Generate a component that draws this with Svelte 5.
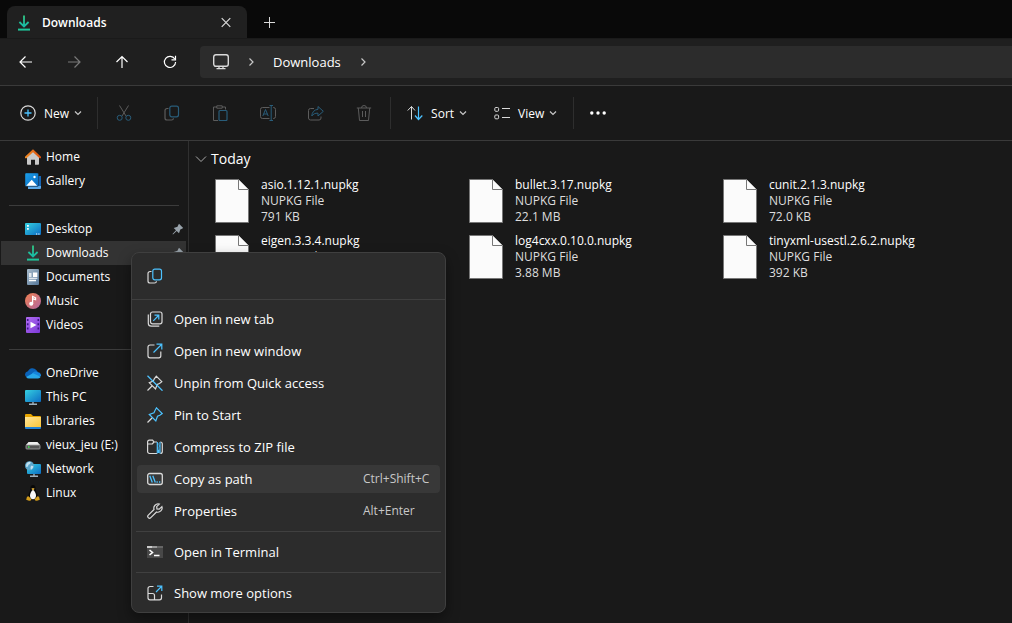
<script>
  const pinned = [
    { label: 'Desktop', icon: 'desktop' },
    { label: 'Downloads', icon: 'download', active: true },
    { label: 'Documents', icon: 'documents' },
    { label: 'Music', icon: 'music' },
    { label: 'Videos', icon: 'videos' }
  ].map((p) => ({ ...p, pin: true }));

  const sidebar = [
    [
      { label: 'Home', icon: 'home' },
      { label: 'Gallery', icon: 'gallery' }
    ],
    pinned,
    [
      { label: 'OneDrive', icon: 'onedrive' },
      { label: 'This PC', icon: 'thispc' },
      { label: 'Libraries', icon: 'libraries' },
      { label: 'vieux_jeu (E:)', icon: 'drive' },
      { label: 'Network', icon: 'network' },
      { label: 'Linux', icon: 'linux' }
    ]
  ];

  const files = [
    { name: 'asio.1.12.1.nupkg', size: '791 KB' },
    { name: 'bullet.3.17.nupkg', size: '22.1 MB' },
    { name: 'cunit.2.1.3.nupkg', size: '72.0 KB' },
    { name: 'eigen.3.3.4.nupkg' },
    { name: 'log4cxx.0.10.0.nupkg', size: '3.88 MB' },
    { name: 'tinyxml-usestl.2.6.2.nupkg', size: '392 KB' }
  ];

  const menu = [
    [
      { label: 'Open in new tab', icon: 'newtab' },
      { label: 'Open in new window', icon: 'newwindow' },
      { label: 'Unpin from Quick access', icon: 'unpin' },
      { label: 'Pin to Start', icon: 'pinstart' },
      { label: 'Compress to ZIP file', icon: 'zip' },
      { label: 'Copy as path', icon: 'path', keys: 'Ctrl+Shift+C', hover: true },
      { label: 'Properties', icon: 'wrench', keys: 'Alt+Enter' }
    ],
    [{ label: 'Open in Terminal', icon: 'terminal' }],
    [{ label: 'Show more options', icon: 'more' }]
  ];

  const actions = [
    { label: 'Cut', icon: 'cut' },
    { label: 'Copy', icon: 'copy' },
    { label: 'Paste', icon: 'paste' },
    { label: 'Rename', icon: 'rename' },
    { label: 'Share', icon: 'share' },
    { label: 'Delete', icon: 'trash' }
  ];

  const navigation = [
    { label: 'Back', icon: 'back' },
    { label: 'Forward', icon: 'forward', disabled: true },
    { label: 'Up', icon: 'up' },
    { label: 'Refresh', icon: 'refresh' }
  ];
</script>

{#snippet icon(name)}
  <svg class="icon" viewBox="0 0 16 16" aria-hidden="true">
    {#if name === 'download'}
      <path d="M8 .5v11M3.4 7 8 11.4 12.6 7" stroke="url(#g-green)" stroke-width="1.8" />
      <path d="M2 14.6h12" stroke="#1fc49a" stroke-width="2" />
    {:else if name === 'close'}
      <path d="m3.7 3.2 8.6 8.6m0-8.6-8.6 8.6" stroke-width="1.2" />
    {:else if name === 'plus'}
      <path d="M8.5 3v11M3 8.5h11" />
    {:else if name === 'back'}
      <path d="M14 8H2.5M7.5 2.5 2 8 7.5 13.5" stroke-width="1.2" />
    {:else if name === 'forward'}
      <path d="M2 8h11.500M8.500 2.500 14 8 8.500 13.500" stroke-width="1.2" />
    {:else if name === 'up'}
      <path d="M8 14V2.500M2.500 8 8 2.500 13.500 8" stroke-width="1.2" />
    {:else if name === 'refresh'}
      <path d="M12.800 5A5.600 5.600 0 1 0 13.600 8" stroke-width="1.2" />
      <path d="M13.500 1.800v4h-4" stroke-width="1.2" />
    {:else if name === 'pc'}
      <rect x=".7" y=".7" width="14.600" height="11.600" rx="2.2" stroke-width="1.4" />
      <path d="M6 12.500v2M10 12.500v2M3.500 14.700h9" stroke-width="1.300" />
    {:else if name === 'new'}
      <circle cx="8" cy="8" r="7.200" stroke-width="1.200" />
      <path class="blue" d="M8 4.500v7M4.500 8h7" stroke-width="1.300" />
    {:else if name === 'cut'}
      <path d="M3.500.5 10 11M12.500.5 6 11" />
      <circle class="blue" cx="3.700" cy="12.800" r="2.500" /><circle class="blue" cx="12.300" cy="12.800" r="2.500" />
    {:else if name === 'copy'}
      <path d="M4.500 3.500H3a2 2 0 0 0-2 2V13a2 2 0 0 0 2 2h4.500a2 2 0 0 0 2-1.800" stroke-width="1.200" />
      <rect class="blue" x="5.800" y="1.200" width="8.700" height="10.600" rx="2" stroke-width="1.200" />
    {:else if name === 'paste'}
      <path d="M5 2H1.500v13.500H6M10 2h3.500v2.500" /><path d="M4.800.8h5.400v2.400H4.800z" />
      <rect class="blue" x="7" y="5.500" width="8" height="10" rx="1" stroke-width="1.200" />
    {:else if name === 'rename'}
      <path d="M9.500 2.500h-7a2 2 0 0 0-2 2v7a2 2 0 0 0 2 2h7M13 2.500h.500a2 2 0 0 1 2 2v7a2 2 0 0 1-2 2H13" />
      <path class="blue" d="M11.200.5v15M9.500.5h3.500M9.500 15.500h3.500M2.800 11 5.500 4.500 8.200 11M3.800 9h3.500" />
    {:else if name === 'share'}
      <path d="M6 3.500H2.500a2 2 0 0 0-2 2V13a2 2 0 0 0 2 2h8.500a2 2 0 0 0 2-2v-1.500" />
      <path class="blue" d="M10 1.500 15.300 6.300 10 11V8.200C7 8 5.300 9 3.800 11 4 7.200 6.200 4.700 10 4.300z" />
    {:else if name === 'trash'}
      <path d="M.8 3h14.400M5.500 3a2.500 2.500 0 0 1 5 0M2.300 3l1.200 12.500h9L13.700 3M6.500 6v6M9.500 6v6" />
    {:else if name === 'sort'}
      <path d="M4.500 14.500v-13M.7 5.500l3.800-4L8 5.500" /><path class="blue" d="M11.500 1.500v13M8 10.500l3.500 4 3.800-4" stroke-width="1.200" />
    {:else if name === 'view'}
      <rect x=".8" y="2.500" width="3.800" height="3.800" rx="1" /><rect x=".8" y="10" width="3.800" height="3.800" rx="1" />
      <path d="M8 3.500h8M8 12.500h8" />
    {:else if name === 'dots'}
      <g fill="#fff" stroke="none"><circle cx="1.800" cy="8" r="1.700" /><circle cx="8" cy="8" r="1.700" /><circle cx="14.200" cy="8" r="1.700" /></g>
    {:else if name === 'newtab'}
      <rect x="3.500" y="1" width="11.500" height="11.800" rx="2" stroke-width="1.200" />
      <path d="M1.300 3.500v8.700a3 3 0 0 0 3 3h8" stroke-width="1.200" />
      <path class="blue" d="m6.300 9.800 5.200-5.300M7.500 4.200h4.300v4.300" stroke-width="1.200" />
    {:else if name === 'newwindow'}
      <path d="M7.500 2H3a2 2 0 0 0-2 2v8.800a2 2 0 0 0 2 2h8.800a2 2 0 0 0 2-2V8.500" stroke-width="1.200" />
      <path class="blue" d="m6.500 9.500 8-8M9.500 1.200h5.300v5.300" stroke-width="1.200" />
    {:else if name === 'unpin'}
      <path d="m9.300 1.200 5.500 5.500-2.300 1.800-2.300 1-1.700 4.500L2.300 7.800l4-1.700 1-2.300zM5 11 .5 15.500" stroke-width="1.200" />
      <path class="blue" d="m.5.7 15 15" stroke-width="1.300" />
    {:else if name === 'pinstart'}
      <path class="blue" d="m9.500.8 5.700 5.700-2.400 1.700-2.300 1-1.700 4.800L2.300 7.500 7 5.800l1-2.300z" stroke-width="1.200" />
      <path d="M5 11 .5 15.500" stroke-width="1.300" />
    {:else if name === 'zip'}
      <path d="M10 3H7L5.500 1.200H2.300A1.700 1.700 0 0 0 .6 3v9.500a2 2 0 0 0 2 2H10M13.300 3a2 2 0 0 1 2 2v7.500a2 2 0 0 1-2 2M.8 5h4.500L7 3" stroke-width="1.200" />
      <path class="blue" d="M10.300 3v11.500M13 3v11.500M10.300 5h1.500M13 7h-1.500M10.300 9h1.500M11.600 10.500V14" stroke-width="1.200" />
    {:else if name === 'path'}
      <rect x=".7" y="2.500" width="14.600" height="11" rx="2" stroke-width="1.300" />
      <path class="blue" d="m2.800 4.700 2.500 6.800M5.800 4.700l2.500 6.800M9.500 11h1.300M12 11h1.300" stroke-width="1.300" />
    {:else if name === 'wrench'}
      <path d="M14.900 3.600 12.200 6.200 9.900 5.900 9.700 3.700 12.300 1.100A4.300 4.300 0 0 0 7 6.500L1.300 12.200a1.700 1.700 0 0 0 2.500 2.500L9.500 9A4.300 4.300 0 0 0 14.900 3.600z" stroke-width="1.200" />
    {:else if name === 'terminal'}
      <path d="M0 2h16v12H0z" fill="#484848" stroke="none" /><path d="M0 2h5v2H0z" fill="#ccc" stroke="none" /><path d="M5 2h5v2H5z" fill="#999" stroke="none" /><path d="M10 2h6v2h-6z" fill="#666" stroke="none" />
      <path d="m2.500 6 3 2.500-3 2.500M7 11.500h5.500" stroke="#fff" stroke-width="1.600" />
    {:else if name === 'more'}
      <path d="M6.500 1.500H3a2 2 0 0 0-2 2v9.300a2 2 0 0 0 2 2h9.500a2 2 0 0 0 2-2V9.500M1 8.500h4.500a2 2 0 0 1 2 2v4.300" stroke-width="1.200" />
      <path class="blue" d="m9 7 5.500-5.500M10 1.200h4.800V6" stroke-width="1.200" />
    {:else if name === 'home'}
      <path d="M2 7.500 8 2l6 5.500V15q0 .8-.8.8H10v-5H6v5H2.800Q2 15.800 2 15z" fill="#c9c9c9" stroke="none" />
      <path d="M1 8.300 8 1.700l7 6.600" stroke="url(#g-roof)" stroke-width="2.200" stroke-linecap="round" />
    {:else if name === 'gallery'}
      <path d="M3 3h12a1 1 0 0 1 1 1v11a1 1 0 0 1-1 1H3z" fill="#5da9e8" stroke="none" /><path d="M13 3h3v10h-3z" fill="#1565b5" stroke="none" />
      <rect y="0" width="13.500" height="13.500" rx="1.200" fill="url(#g-blue)" stroke="#191919" stroke-width=".4" />
      <path d="m1.200 12.700 5.500-6 5.500 6z" fill="#fff" stroke="none" /><circle cx="9.500" cy="4" r="1.200" fill="#fff" stroke="none" />
    {:else if name === 'desktop'}
      <rect y="2" width="16" height="12" rx="1" fill="url(#g-cyan)" stroke="none" />
      <path d="M2 4h1.800v1.800H2zM2 7h1.800v1.800H2zM11 12.500h1.200v1H11zM13.300 12.500h1.200v1h-1.200z" fill="#fff" stroke="none" />
    {:else if name === 'documents'}
      <rect x="2" width="12" height="16" rx="1" fill="url(#g-doc)" stroke="none" />
      <path d="M4 5h2.500M4 7h2.500M4 11.500h7" stroke="#fff" stroke-width="1.300" /><path d="M8 3.500h4.300V8H8zM4 8.800h8.300v1H4z" fill="#fff" stroke="none" />
    {:else if name === 'music'}
      <circle cx="8" cy="8" r="8" fill="url(#g-music)" stroke="none" />
      <circle cx="6.200" cy="10.800" r="2" fill="#fff" stroke="none" /><path d="M7.600 11V3.500l3 1.300v1.800l-3-1" stroke="#fff" stroke-width="1.200" />
    {:else if name === 'videos'}
      <rect x="1" width="14" height="16" rx="1" fill="url(#g-video)" stroke="none" />
      <path d="M2.700 2v12M13.300 2v12" stroke="#3c1585" stroke-width="1.600" stroke-dasharray="2 2.200" /><path d="M5.500 4.700v6.600l6-3.300z" fill="#fff" stroke="none" />
    {:else if name === 'onedrive'}
      <path d="M3.500 12.500A3.500 3.500 0 0 1 0 9.300Q.3 6.700 2.900 6.200A5 5 0 0 1 11.500 5.300l1.500 2z" fill="#0b62b8" stroke="none" />
      <path d="M4 13 7 8.500a4 4 0 0 1 6-1.200A3.200 3.200 0 0 1 16 11z" fill="#1684db" stroke="none" /><path d="M1.200 12 8 8.300l7.800 3.500Q15 13.500 13 13.500H4q-2 0-2.800-1.500z" fill="#28a8ea" stroke="none" />
    {:else if name === 'thispc'}
      <rect y="1" width="16" height="12" rx="1" fill="url(#g-cyan)" stroke="none" /><path d="M8 13v2M4 15.300h8" stroke="#9db0bd" stroke-width="1.400" />
    {:else if name === 'libraries'}
      <path d="M0 2Q0 1 1 1h5l2 2h7q1 0 1 1v10H0z" fill="#e8a500" stroke="none" /><path d="M0 4h16v10H0z" fill="url(#g-folder)" stroke="none" /><path d="M0 14h16v1q0 1-1 1H1q-1 0-1-1z" fill="#2484d8" stroke="none" />
    {:else if name === 'drive'}
      <path d="M3.500 5h9L15 8H1z" fill="#eee" stroke="none" /><rect x="1" y="8" width="14" height="4" rx=".7" fill="#555" stroke="#aaa" stroke-width=".8" /><circle cx="3.800" cy="10" r=".9" fill="#40df50" stroke="none" />
    {:else if name === 'network'}
      <rect x="2" y="3" width="14" height="10" rx="1" fill="url(#g-cyan)" stroke="none" /><path d="M9 13v2M5 15.300h8" stroke="#9db0bd" stroke-width="1.400" />
      <circle cx="4.500" cy="4.800" r="4.500" fill="#5ba6cb" stroke="none" /><path d="M1.200 3q2-2.700 4.600-2Q5.500 3.500 3.500 3.800 3 6.500 1.200 6zM6 4.700q2-.2 2.500 1-.7 2-2.500 3-1-2 0-4z" fill="#bfe0f2" stroke="none" />
    {:else if name === 'linux'}
      <path d="M8 0Q5.300 0 5.500 3.500 5.300 6 3.500 9.500 3 13.500 5 15h6q2-1.500 1.500-5.500-1.800-3.500-2-6Q10.700 0 8 0z" fill="#080808" stroke="none" />
      <path d="M8 5Q6 5.800 5 10q-.2 4 3 4.300 3.200-.3 3-4.300Q10 5.800 8 5z" fill="#f7f7f7" stroke="none" /><path d="m6.300 3.700 1.700-.8 1.700.8L8 5.500z" fill="#e6b33a" stroke="none" />
      <path d="m3.500 11.300 3 3q-.5 1.700-2.500 1.500l-2.800-1 .8-3zM12.500 11.300l-3 3q.5 1.700 2.500 1.500l2.800-1-.8-3z" fill="#d49d1c" stroke="none" />
    {/if}
  </svg>
{/snippet}

{#snippet chevron(down)}
  <svg class="chevron" viewBox="0 0 8 8" aria-hidden="true">
    <path d={down ? 'M1 2.500 4 5.500 7 2.500' : 'M2.500.5 6 4 2.500 7.500'} stroke-width="1.2" />
  </svg>
{/snippet}

<svg class="defs" aria-hidden="true">
  <defs>
    <linearGradient id="g-green" gradientUnits="userSpaceOnUse" x1="8" y1="0" x2="8" y2="12"><stop stop-color="#33c982" /><stop offset="1" stop-color="#16b8a8" /></linearGradient>
    <linearGradient id="g-roof" x1="0" x2="1"><stop stop-color="#f08a24" /><stop offset="1" stop-color="#d8500f" /></linearGradient>
    <linearGradient id="g-blue" x2="1" y2="1"><stop stop-color="#1ba0ea" /><stop offset="1" stop-color="#0a68c0" /></linearGradient>
    <linearGradient id="g-cyan" x2="1" y2="1"><stop stop-color="#35d0e0" /><stop offset="1" stop-color="#0c6cc4" /></linearGradient>
    <linearGradient id="g-doc" x2="1" y2="1"><stop stop-color="#a8bccc" /><stop offset="1" stop-color="#56789a" /></linearGradient>
    <linearGradient id="g-music" x2="1" y2="1"><stop stop-color="#f08050" /><stop offset="1" stop-color="#b267a0" /></linearGradient>
    <linearGradient id="g-video" x2="1" y2="1"><stop stop-color="#b06cf0" /><stop offset="1" stop-color="#7c38d8" /></linearGradient>
    <linearGradient id="g-folder" x2="1" y2="1"><stop stop-color="#ffe69a" /><stop offset="1" stop-color="#fbc638" /></linearGradient>
  </defs>
</svg>

<div class="window">
  <header class="tabs">
    <div class="tab">
      {@render icon('download')}
      <span>Downloads</span>
      <button aria-label="Close tab">{@render icon('close')}</button>
    </div>
    <button class="add" aria-label="New tab">{@render icon('plus')}</button>
  </header>

  <div class="navbar">
    <div class="nav-buttons">
      {#each navigation as item}
        <button aria-label={item.label} disabled={item.disabled}>{@render icon(item.icon)}</button>
      {/each}
    </div>
    <nav class="address" aria-label="Address">
      <button aria-label="This PC">{@render icon('pc')}</button>
      {@render chevron(false)}
      <button class="crumb">Downloads</button>
      {@render chevron(false)}
    </nav>
  </div>

  <div class="toolbar">
    <button class="command new">{@render icon('new')}<span>New</span>{@render chevron(true)}</button>
    <div class="actions">
      {#each actions as item}
        <button aria-label={item.label} disabled>{@render icon(item.icon)}</button>
      {/each}
    </div>
    <div class="arrange">
      <button class="command">{@render icon('sort')}<span>Sort</span>{@render chevron(true)}</button>
      <button class="command">{@render icon('view')}<span>View</span>{@render chevron(true)}</button>
    </div>
    <button class="see-more" aria-label="See more">{@render icon('dots')}</button>
  </div>

  <div class="body">
    <nav class="sidebar" aria-label="Folders">
      {#each sidebar as group}
        <ul>
          {#each group as item}
            <li>
              <a href="#top" class:active={item.active}>
                {@render icon(item.icon)}
                <span>{item.label}</span>
                {#if item.pin}
                  <svg class="pin" viewBox="0 0 12 12" aria-hidden="true"><path d="M7 .8 11.200 5 9.500 6l-1.200.5-1.300 3.800-2.300-2.300L1 11.500.5 11 4 7.300 1.700 5l3.800-1.300L6 2.500z" /></svg>
                {/if}
              </a>
            </li>
          {/each}
        </ul>
      {/each}
    </nav>

    <main>
      <h2>
        <svg class="caret" viewBox="0 0 12 12" aria-hidden="true"><path d="m1 3.500 5 5 5-5" /></svg>
        Today
      </h2>
      <ul class="files">
        {#each files as file}
          <li>
            <svg class="sheet" viewBox="0 0 34 44" aria-hidden="true">
              <path d="M.5.5h23l10 10v33H.5z" fill="#fbfbfb" stroke="#777" />
              <path d="M23.500.5v10h10" fill="#fbfbfb" stroke="#777" />
            </svg>
            <div>
              <p class="name">{file.name}</p>
              <p>NUPKG File</p>
              {#if file.size}<p>{file.size}</p>{/if}
            </div>
          </li>
        {/each}
      </ul>
    </main>
  </div>

  <div class="menu" role="menu">
    <div class="quick">
      <button role="menuitem" aria-label="Copy">{@render icon('copy')}</button>
    </div>
    {#each menu as group}
      <div class="group">
        {#each group as item}
          <button role="menuitem" class:hover={item.hover}>
            {@render icon(item.icon)}
            <span>{item.label}</span>
            {#if item.keys}<kbd>{item.keys}</kbd>{/if}
          </button>
        {/each}
      </div>
    {/each}
  </div>
</div>

<style>
  :global(body) {
    margin: 0;
    background: #191919;
  }
  .window {
    position: relative;
    display: flex;
    flex-direction: column;
    min-height: 100vh;
    overflow: hidden;
    background: #191919;
    color: #fff;
    font-family: 'Open Sans', 'Noto Sans', sans-serif;
    font-size: 12px;
    line-height: 16px;
  }
  .defs {
    position: absolute;
    width: 0;
    height: 0;
  }
  button {
    display: flex;
    align-items: center;
    padding: 0;
    border: 0;
    background: none;
    color: inherit;
    font: inherit;
  }
  ul,
  p,
  h2 {
    margin: 0;
    padding: 0;
    list-style: none;
  }
  .icon {
    flex: none;
    width: 16px;
    height: 16px;
    fill: none;
    stroke: #dadada;
    stroke-width: 1;
  }
  .icon .blue {
    stroke: #4cc2ff;
  }
  .chevron {
    flex: none;
    width: 8px;
    height: 8px;
    fill: none;
    stroke: #c8c8c8;
  }

  .tabs {
    display: flex;
    align-items: flex-end;
    height: 38px;
    padding-left: 7px;
    background: #090909;
  }
  .tab {
    display: flex;
    align-items: center;
    gap: 10px;
    box-sizing: border-box;
    width: 240px;
    height: 32px;
    padding: 1px 13px 0 9px;
    border-radius: 8px 8px 0 0;
    background: #202020;
    font-weight: 600;
  }
  .tab button {
    margin-left: auto;
  }
  .add {
    height: 32px;
    margin-left: 14px;
  }

  .navbar {
    display: flex;
    align-items: center;
    gap: 22px;
    height: 46px;
    padding-left: 18px;
    border-top: 1px solid #1a1a1a;
    border-bottom: 1px solid #3a3a3a;
    background: #1f1f1f;
  }
  .nav-buttons {
    display: flex;
    gap: 32px;
  }
  .nav-buttons button:disabled {
    opacity: 0.4;
  }
  .nav-buttons .icon {
    stroke: #fff;
  }
  .address {
    display: flex;
    flex: 1;
    align-items: center;
    gap: 18px;
    height: 32px;
    padding-left: 13px;
    border-radius: 4px 0 0 4px;
    background: #2c2c2c;
    font-size: 13px;
  }

  .toolbar {
    display: flex;
    align-items: center;
    height: 54px;
    border-bottom: 1px solid #3a3a3a;
  }
  .command {
    gap: 8px;
  }
  .command span {
    padding-top: 2px;
  }
  .command .chevron {
    margin-left: -3px;
  }
  .new {
    padding: 0 15px 0 20px;
  }
  .actions,
  .arrange {
    display: flex;
    align-items: center;
    height: 32px;
    border-left: 1px solid #2e2e2e;
    border-right: 1px solid #2e2e2e;
  }
  .actions {
    gap: 32px;
    padding: 0 18px;
  }
  .actions .icon {
    stroke: #5c5c5c;
  }
  .actions .icon .blue {
    stroke: #295d7a;
  }
  .arrange {
    gap: 27px;
    padding: 0 16px;
    border-left: 0;
  }
  .see-more {
    margin-left: 16px;
  }

  .body {
    display: flex;
    flex: 1;
  }
  .sidebar {
    box-sizing: border-box;
    flex: none;
    width: 189px;
    padding: 4px 2px 0 1px;
    border-right: 1px solid #303030;
  }
  .sidebar ul + ul {
    margin-top: 12px;
    padding-top: 11px;
    border-top: 1px solid transparent;
    background: linear-gradient(#3c3c3c, #3c3c3c) 8px 0 / calc(100% - 15px) 1px no-repeat border-box;
  }
  .sidebar a {
    display: flex;
    align-items: center;
    gap: 5px;
    height: 24px;
    padding: 0 2px 0 24px;
    color: inherit;
    text-decoration: none;
  }
  .sidebar a.active {
    background: #333;
  }
  .pin {
    width: 12px;
    height: 12px;
    margin-left: auto;
    fill: #98a2aa;
  }

  main {
    flex: 1;
    padding: 8px 0 0 6px;
  }
  h2 {
    display: flex;
    align-items: center;
    gap: 4px;
    font-size: 14px;
    font-weight: 400;
    line-height: 20px;
  }
  .caret {
    width: 12px;
    height: 12px;
    fill: none;
    stroke: #aaa;
  }
  .files {
    display: grid;
    grid-template-columns: repeat(auto-fill, 254px);
    row-gap: 8px;
    padding: 8px 0 0 20px;
  }
  .files li {
    display: flex;
    gap: 12px;
    min-height: 48px;
    color: #dedede;
  }
  .name {
    color: #fff;
  }
  .sheet {
    width: 34px;
    height: 44px;
    margin-top: 2px;
  }

  .menu {
    position: absolute;
    top: 252px;
    left: 131px;
    box-sizing: border-box;
    width: 315px;
    border: 1px solid #3f3f3f;
    border-radius: 8px;
    background: #2c2c2c;
    box-shadow: 0 6px 14px rgba(0, 0, 0, 0.4);
    font-size: 13px;
  }
  .quick {
    display: flex;
    align-items: center;
    height: 46px;
    padding-left: 15px;
    border-bottom: 1px solid #3f3f3f;
  }
  .group {
    margin: 0 4px;
    padding: 4px 1px;
  }
  .quick + .group {
    padding-top: 3px;
  }
  .group:last-child {
    padding-bottom: 3px;
  }
  .group + .group {
    border-top: 1px solid #404040;
  }
  .group button {
    gap: 11px;
    width: 100%;
    height: 28px;
    margin: 2px 0;
    padding: 0 10px;
    border-radius: 4px;
  }
  .group button + button {
    margin-top: 4px;
  }
  .group button.hover {
    background: #383838;
  }
  kbd {
    width: 67px;
    margin-left: auto;
    color: #c8c8c8;
    font-family: inherit;
    font-size: 12px;
    text-align: left;
    white-space: nowrap;
  }
</style>
